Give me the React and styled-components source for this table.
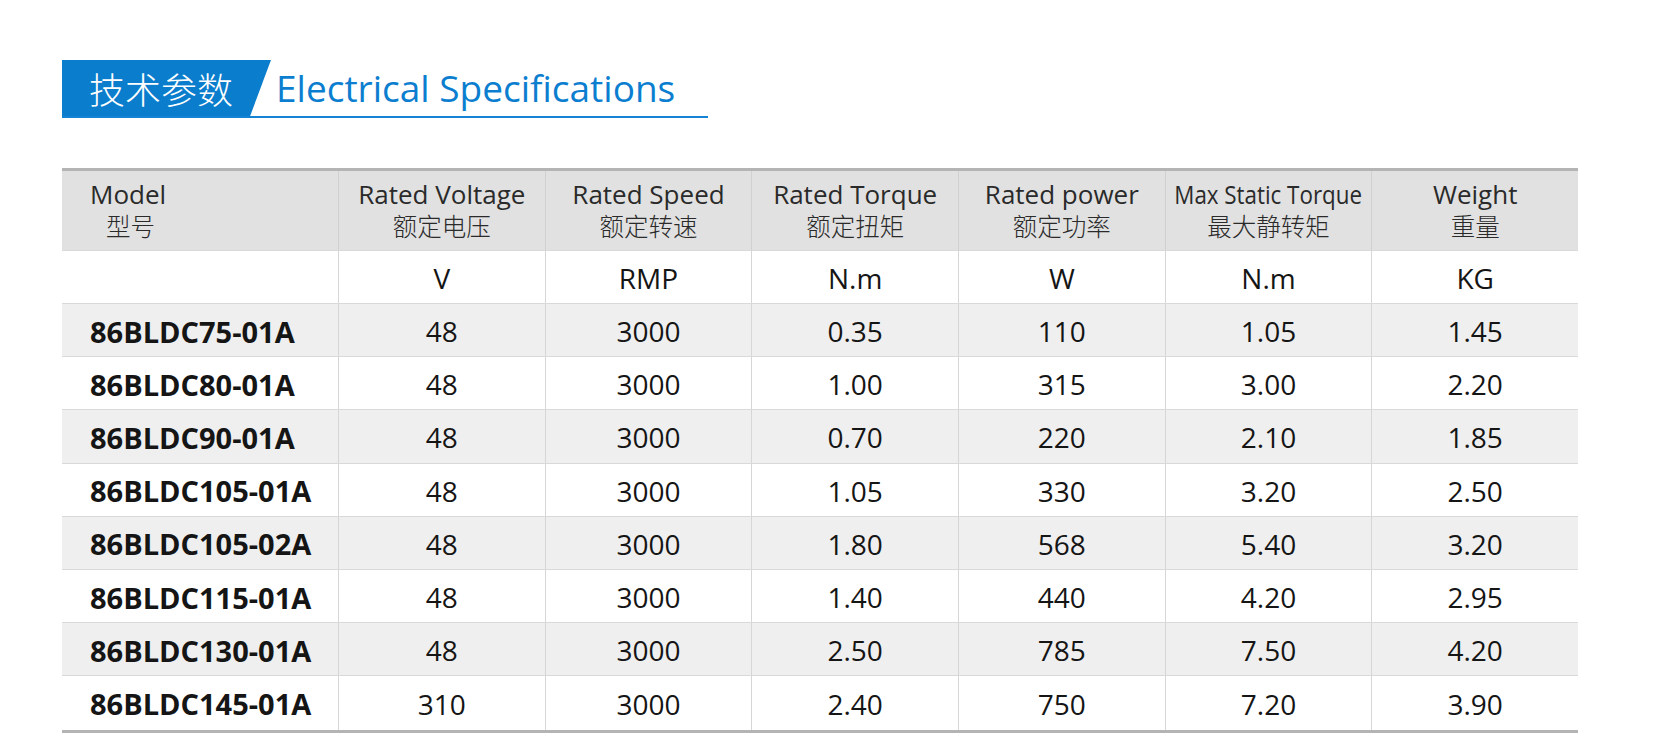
import React from "react";
import styled, { createGlobalStyle } from "styled-components";

const columns = [
  { en: "Model", zh: "型号", unit: "" },
  { en: "Rated Voltage", zh: "额定电压", unit: "V" },
  { en: "Rated Speed", zh: "额定转速", unit: "RMP" },
  { en: "Rated Torque", zh: "额定扭矩", unit: "N.m" },
  { en: "Rated power", zh: "额定功率", unit: "W" },
  { en: "Max Static Torque", zh: "最大静转矩", unit: "N.m", squeeze: true },
  { en: "Weight", zh: "重量", unit: "KG" },
];

const rows = [
  ["86BLDC75-01A", "48", "3000", "0.35", "110", "1.05", "1.45"],
  ["86BLDC80-01A", "48", "3000", "1.00", "315", "3.00", "2.20"],
  ["86BLDC90-01A", "48", "3000", "0.70", "220", "2.10", "1.85"],
  ["86BLDC105-01A", "48", "3000", "1.05", "330", "3.20", "2.50"],
  ["86BLDC105-02A", "48", "3000", "1.80", "568", "5.40", "3.20"],
  ["86BLDC115-01A", "48", "3000", "1.40", "440", "4.20", "2.95"],
  ["86BLDC130-01A", "48", "3000", "2.50", "785", "7.50", "4.20"],
  ["86BLDC145-01A", "310", "3000", "2.40", "750", "7.20", "3.90"],
];

function App() {
  return (
    <>
      <GlobalStyle />
      <Page>
        <Heading>
          <Badge>技术参数</Badge>
          <Title>Electrical Specifications</Title>
        </Heading>

        <Table>
          <Row $kind="head">
            {columns.map((c, i) => (
              <HeadCell key={c.en} $first={i === 0}>
                <HeadEn $squeeze={c.squeeze}>{c.en}</HeadEn>
                <HeadZh $first={i === 0}>{c.zh}</HeadZh>
              </HeadCell>
            ))}
          </Row>
          <Row $kind="unit">
            {columns.map((c, i) => (
              <Cell key={c.en} $first={i === 0}>
                {c.unit}
              </Cell>
            ))}
          </Row>
          {rows.map((r, idx) => (
            <Row key={r[0]} $kind={idx % 2 === 0 ? "odd" : "even"}>
              {r.map((v, i) => (
                <Cell key={i} $first={i === 0}>
                  {v}
                </Cell>
              ))}
            </Row>
          ))}
        </Table>
      </Page>
    </>
  );
}

export default App;

const GlobalStyle = createGlobalStyle`
  *, *::before, *::after {
    box-sizing: border-box;
  }
  html, body {
    margin: 0;
    padding: 0;
    background: #ffffff;
  }
  body {
    font-family: "Open Sans", "Noto Sans CJK SC", sans-serif;
  }
`;

const Page = styled.div`
  padding: 60px 0 0 62px;
  width: 1578px;
`;

const Heading = styled.div`
  display: flex;
  align-items: flex-end;
  width: 646px;
  border-bottom: 2px solid #1583d3;
`;

const Badge = styled.div`
  width: 209px;
  height: 56px;
  padding-left: 27px;
  display: flex;
  align-items: center;
  background: #0a7dcd;
  color: #ffffff;
  font-family: "Noto Sans CJK SC", sans-serif;
  font-size: 36px;
  font-weight: 300;
  clip-path: polygon(0 0, 100% 0, 90% 100%, 0 100%);
`;

const Title = styled.div`
  margin-left: 5px;
  height: 56px;
  display: flex;
  align-items: center;
  color: #0c7ed0;
  font-family: "Open Sans", sans-serif;
  font-size: 37px;
  padding-bottom: 2px;
`;

const Table = styled.div`
  margin-top: 50px;
  border-top: 3px solid #b4b4b4;
  border-bottom: 3px solid #b4b4b4;
`;

const rowBg = {
  head: "#e1e1e1",
  unit: "#ffffff",
  odd: "#efefef",
  even: "#ffffff",
};

const rowHeight = {
  head: "80px",
  unit: "53px",
  odd: "53.2px",
  even: "53.2px",
};

const Row = styled.div`
  display: grid;
  grid-template-columns: 276px repeat(6, minmax(0, 1fr));
  height: ${(p) => rowHeight[p.$kind]};
  background: ${(p) => rowBg[p.$kind]};
  border-bottom: 1px solid #d9d9d9;
  &:last-child {
    border-bottom: none;
  }
`;

const Cell = styled.div`
  display: flex;
  align-items: center;
  justify-content: ${(p) => (p.$first ? "flex-start" : "center")};
  padding-left: ${(p) => (p.$first ? "28px" : "0")};
  border-left: ${(p) => (p.$first ? "none" : "1px solid #d6d6d6")};
  font-size: ${(p) => (p.$first ? "29px" : "28px")};
  font-weight: ${(p) => (p.$first ? 700 : 400)};
  color: #151515;
  padding-top: 2px;
`;

const HeadCell = styled.div`
  display: flex;
  flex-direction: column;
  justify-content: center;
  align-items: ${(p) => (p.$first ? "flex-start" : "center")};
  padding-left: ${(p) => (p.$first ? "28px" : "0")};
  border-left: ${(p) => (p.$first ? "none" : "1px solid #d0d0d0")};
  color: #2a2a2a;
  padding-bottom: 2px;
`;

const HeadEn = styled.span`
  display: block;
  height: 30px;
  font-size: 26px;
  line-height: 30px;
  white-space: nowrap;
  transform: ${(p) => (p.$squeeze ? "scaleX(0.86)" : "none")};
`;

const HeadZh = styled.span`
  display: block;
  height: 31px;
  margin-top: 1px;
  font-family: "Noto Sans CJK SC", sans-serif;
  font-size: 24.5px;
  font-weight: 300;
  line-height: 31px;
  padding-left: ${(p) => (p.$first ? "16px" : "0")};
`;
